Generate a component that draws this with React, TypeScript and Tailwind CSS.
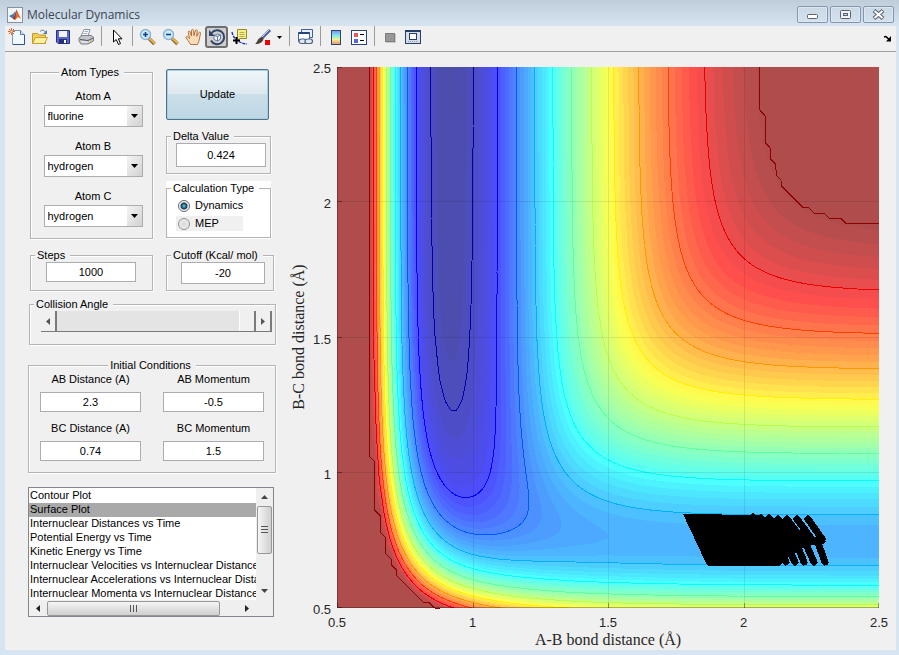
import React, { useState } from "react";

/* ---------- Potential energy surface (London-Eyring-Polanyi-Sato) ---------- */

type Bond = { d: number; beta: number; re: number };

const HF: Bond = { d: 141.2, beta: 2.2187, re: 0.917 };
const HH: Bond = { d: 109.5, beta: 1.942, re: 0.7414 };
const SATO = 0.185;
const CAP = -22.6;
const LINE_BASE = -136.9;
const LINE_STEP = 10.37;

function terms(bond: Bond, r: number) {
  const e = Math.exp(-bond.beta * (r - bond.re));
  const singlet = bond.d * (e * e - 2 * e);
  const triplet = (((1 - SATO) / (1 + SATO)) * bond.d * (e * e + 2 * e)) / 2;
  return { q: (singlet + triplet) / 2, j: (singlet - triplet) / 2 };
}

function energy(rab: number, rbc: number) {
  const a = terms(HF, rab);
  const b = terms(HH, rbc);
  const c = terms(HF, rab + rbc);
  const s = (a.j - b.j) ** 2 + (b.j - c.j) ** 2 + (c.j - a.j) ** 2;
  return a.q + b.q + c.q - Math.sqrt(s / 2);
}

const X0 = 52;
const Y0 = 555;
const SX = 271;
const SY = 270.5;
const N = 100;
const px = (i: number) => X0 + i * 0.02 * SX;
const py = (k: number) => Y0 - k * 0.02 * SY;

const field: number[][] = [];
for (let k = 0; k <= N; k++) {
  const row: number[] = [];
  for (let i = 0; i <= N; i++) row.push(Math.min(CAP, energy(0.5 + i * 0.02, 0.5 + k * 0.02)));
  field.push(row);
}

function jet(v: number, alpha: number) {
  const t = 0.04 + (v - LINE_BASE) / 120.9;
  const ch = (c: number) => Math.max(0, Math.min(1, 1.5 - Math.abs(4 * t - c)));
  const mix = (x: number) => Math.round(255 * (x * alpha + 1 - alpha));
  return `rgb(${mix(ch(3))},${mix(ch(2))},${mix(ch(1))})`;
}

const CORNERS = [[0, 0], [1, 0], [1, 1], [0, 1]];
const f1 = (n: number) => n.toFixed(1);

function trace(level: number) {
  let fill = "";
  let line = "";
  for (let k = 0; k < N; k++) {
    let run = -1;
    for (let i = 0; i <= N; i++) {
      const vals = i < N ? CORNERS.map(([a, b]) => field[k + b][i + a]) : [];
      const full = i < N && vals.every((v) => v < level);
      if (full) {
        if (run < 0) run = i;
        continue;
      }
      if (run >= 0) {
        fill += `M${f1(px(run))} ${f1(py(k))}H${f1(px(i))}V${f1(py(k + 1))}H${f1(px(run))}Z`;
        run = -1;
      }
      if (i === N || !vals.some((v) => v < level)) continue;
      const poly: string[] = [];
      const cross: string[] = [];
      for (let c = 0; c < 4; c++) {
        const n = (c + 1) % 4;
        const [ax, ay] = CORNERS[c];
        const [bx, by] = CORNERS[n];
        if (vals[c] < level) poly.push(`${f1(px(i + ax))} ${f1(py(k + ay))}`);
        if (vals[c] < level !== vals[n] < level) {
          const t = (level - vals[c]) / (vals[n] - vals[c]);
          const p = `${f1(px(i + ax + (bx - ax) * t))} ${f1(py(k + ay + (by - ay) * t))}`;
          poly.push(p);
          cross.push(p);
        }
      }
      fill += `M${poly.join("L")}Z`;
      for (let c = 0; c + 1 < cross.length; c += 2) line += `M${cross[c]}L${cross[c + 1]}`;
    }
  }
  return { fill, line };
}

const bands: { d: string; color: string }[] = [];
const BAND = LINE_STEP / 5;
for (let j = 57; j >= 0; j--) {
  const top = LINE_BASE - 2 * BAND + j * BAND;
  if (top < CAP) bands.push({ d: trace(top).fill, color: jet(top - BAND / 2, 0.7) });
}
const lines: { d: string; color: string }[] = [];
for (let n = 0; n < 11; n++) {
  const level = LINE_BASE + n * LINE_STEP;
  lines.push({ d: trace(level).line, color: jet(level, 1) });
}
lines.push({ d: trace(CAP - 0.001).line, color: "#8f0000" });

const STRANDS = [
  [523, 466, 537, 486], [512, 466, 528, 488], [502, 466, 518, 488], [493, 466, 508, 486], [484, 465, 498, 486],
  [476, 465, 490, 485], [468, 464, 480, 480], [540, 509, 532, 487], [529, 509, 516, 480], [519, 509, 508, 482],
  [510, 509, 498, 485], [501, 509, 490, 485], [494, 509, 484, 490],
];

function Plot() {
  const ticks = [0.5, 1, 1.5, 2, 2.5];
  const gx = (v: number) => X0 + (v - 0.5) * SX;
  const gy = (v: number) => Y0 - (v - 0.5) * SY;
  return (
    <svg viewBox="0 0 611 597" className="block w-full" role="img" aria-label="Surface plot of A-B and B-C bond distances">
      <g shapeRendering="crispEdges">
        <rect x={X0} y={14} width={542} height={541} fill="#af4c4c" />
        {bands.map((b, i) => <path key={i} d={b.d} fill={b.color} />)}
        {lines.map((l, i) => <path key={i} d={l.d} stroke={l.color} fill="none" />)}
        {ticks.slice(1, 4).map((v) => (
          <path key={v} d={`M${Math.round(gx(v))}.5 14V555M52 ${Math.round(gy(v)) - 1}.5H594`} stroke="#000" strokeOpacity="0.09" fill="none" />
        ))}
        {ticks.map((v) => (
          <path key={v} d={`M${Math.min(593, Math.round(gx(v)))}.5 550V555M52 ${Math.max(14, Math.round(gy(v)) - 1)}.5h5`} stroke="#000" strokeOpacity="0.35" fill="none" />
        ))}
        <path d="M52.5 14V555M52 554.5H594" stroke="#000" strokeOpacity="0.3" fill="none" />
        <path d="M398 461L475 462L483 467L492 470L503 474L514 478L526 483L541 488L538 491L527 492L518 495L510 500L503 504L495 513L423 513L420 508Z" />
        {STRANDS.map(([a, b, c, d]) => (
          <path key={`${a}-${b}`} d={`M${a} ${b}L${c} ${d}`} stroke="#000" strokeWidth="7" strokeLinecap="round" />
        ))}
      </g>
      <g fill="#262626" className="font-['Liberation_Sans',Arial,sans-serif] text-[13px]">
        {ticks.map((v) => <text key={v} x={gx(v)} y={574} textAnchor="middle">{v}</text>)}
        {ticks.map((v) => <text key={v} x={46} y={gy(v) + 6} textAnchor="end">{v}</text>)}
      </g>
      <g fill="#262626" className="font-['Liberation_Serif','Times_New_Roman',serif] text-[16px]">
        <text x={323} y={592} textAnchor="middle">A-B bond distance (Å)</text>
        <text transform="translate(19 284) rotate(-90)" textAnchor="middle">B-C bond distance (Å)</text>
      </g>
    </svg>
  );
}

/* ------------------------------- Controls -------------------------------- */

function Panel({ title, center, white, className, children }: {
  title: string; center?: boolean; white?: boolean; className: string; children: React.ReactNode;
}) {
  return (
    <fieldset className={`min-w-0 border border-[#b4b4b4] shadow-[inset_1px_1px_0_#fff,1px_1px_0_#fff] ${className}`}>
      <legend className={`h-[14px] pr-[5px] pl-[2px] leading-[14px] ${center ? "mx-auto" : "ml-[4px]"} ${white ? "bg-white" : "bg-[#f0f0f0]"}`}>{title}</legend>
      {children}
    </fieldset>
  );
}

function Field({ label, value, className }: { label: string; value: string; className: string }) {
  const [text, setText] = useState(value);
  return (
    <input
      aria-label={label}
      value={text}
      onChange={(e) => setText(e.target.value)}
      className={`block border border-[#abadb3] bg-white text-center outline-none ${className}`}
    />
  );
}

function AtomSelect({ label, value }: { label: string; value: string }) {
  return (
    <label className="flex flex-col items-center gap-[2px] leading-[14px]">
      {label}
      <span className="relative block w-[99px]">
        <select defaultValue={value} className="block h-[22px] w-full appearance-none border border-[#abadb3] bg-white pl-[3px] outline-none">
          <option>fluorine</option>
          <option>hydrogen</option>
          <option>chlorine</option>
        </select>
        <span className="pointer-events-none absolute top-[1px] right-[1px] bottom-[1px] flex w-[15px] items-center justify-center bg-gradient-to-br from-[#f4f4f4] to-[#d2d2d2]">
          <svg width="7" height="4" viewBox="0 0 7 4"><path d="M0 0H7L3.5 4Z" /></svg>
        </span>
      </span>
    </label>
  );
}

function LabeledField({ label, value }: { label: string; value: string }) {
  return (
    <label className="flex flex-col items-center gap-[6px] leading-[14px]">
      {label}
      <Field label={label} value={value} className="h-[20px] w-[101px]" />
    </label>
  );
}

function Radio({ label, checked, className }: { label: string; checked?: boolean; className?: string }) {
  return (
    <label className={`flex h-[15px] w-[67px] items-center gap-[5px] pl-[2px] ${className ?? ""}`}>
      <input
        type="radio"
        name="calculation"
        defaultChecked={checked}
        className="h-[12px] w-[12px] shrink-0 appearance-none rounded-full border border-[#8e8f8f] bg-[radial-gradient(#d8d8d8,#f6f6f6)] checked:border-[#6b6b6b] checked:bg-[radial-gradient(circle,#5cc8f0_0,#14384f_3px,#f0f0f0_4px)]"
      />
      {label}
    </label>
  );
}

const PLOTS = [
  "Contour Plot", "Surface Plot", "Internuclear Distances vs Time", "Potential Energy vs Time", "Kinetic Energy vs Time",
  "Internuclear Velocities vs Internuclear Distance", "Internuclear Accelerations vs Internuclear Distance", "Internuclear Momenta vs Internuclear Distance",
];

function PlotList() {
  return (
    <div className="grid h-[130px] w-[246px] grid-cols-[1fr_17px] grid-rows-[1fr_16px] border border-[#828790] bg-white">
      <select
        size={8}
        aria-label="Plot type"
        defaultValue="Surface Plot"
        className="h-[112px] w-full min-w-0 overflow-hidden bg-white pt-px outline-none [scrollbar-width:none] [&>option]:h-[14px] [&>option]:min-h-0 [&>option]:overflow-hidden [&>option]:p-0 [&>option]:pl-px [&>option]:leading-[14px] [&>option]:whitespace-nowrap [&>option:checked]:bg-[linear-gradient(#a9a9a9,#a9a9a9)] [&>option:checked]:text-black"
      >
        {PLOTS.map((p) => <option key={p}>{p}</option>)}
      </select>
      <div className="flex flex-col items-center bg-[#efefef]">
        <button aria-label="Scroll up" className="flex h-[18px] w-full items-center justify-center"><svg width="7" height="4" viewBox="0 0 7 4"><path d="M0 4H7L3.5 0Z" fill="#444" /></svg></button>
        <div className="flex h-[48px] w-[15px] items-center justify-center rounded-[2px] border border-[#979797] bg-gradient-to-r from-[#f5f5f5] to-[#cfcfcf]">
          <svg width="7" height="8" viewBox="0 0 7 8"><path d="M0 .5H7M0 3.5H7M0 6.5H7" stroke="#555" /></svg>
        </div>
        <div className="flex-1" />
        <button aria-label="Scroll down" className="flex h-[18px] w-full items-center justify-center"><svg width="7" height="4" viewBox="0 0 7 4"><path d="M0 0H7L3.5 4Z" fill="#444" /></svg></button>
      </div>
      <div className="flex items-center bg-[#efefef]">
        <button aria-label="Scroll left" className="flex h-full w-[18px] items-center justify-center"><svg width="4" height="7" viewBox="0 0 4 7"><path d="M4 0V7L0 3.5Z" fill="#222" /></svg></button>
        <div className="flex h-[15px] w-[173px] items-center justify-center rounded-[2px] border border-[#979797] bg-gradient-to-b from-[#f5f5f5] to-[#cfcfcf]">
          <svg width="8" height="7" viewBox="0 0 8 7"><path d="M.5 0V7M3.5 0V7M6.5 0V7" stroke="#555" /></svg>
        </div>
        <div className="flex-1" />
        <button aria-label="Scroll right" className="flex h-full w-[18px] items-center justify-center"><svg width="4" height="7" viewBox="0 0 4 7"><path d="M0 0V7L4 3.5Z" fill="#222" /></svg></button>
      </div>
      <div className="bg-[#efefef]" />
    </div>
  );
}

/* -------------------------------- Toolbar -------------------------------- */

function Tool({ label, active, children }: { label: string; active?: boolean; children: React.ReactNode }) {
  return (
    <button
      aria-label={label}
      className={`flex h-[22px] w-[23px] shrink-0 items-center justify-center ${active ? "rounded-[3px] border-2 border-[#6f6f6f] bg-[#cfcfcf]" : ""}`}
    >
      <svg width="18" height="18" viewBox="0 0 18 18" fill="none" className="shrink-0">{children}</svg>
    </button>
  );
}

const Sep = () => <span className="mr-[3px] ml-1 h-[20px] w-px shrink-0 bg-[#9a9a9a]" />;

function Magnifier({ plus }: { plus?: boolean }) {
  return (
    <>
      <path d="M10 10.500L15.500 16" stroke="#7a6a48" strokeWidth="3.600" />
      <path d="M10.500 10.500L16 15.500" stroke="#f0b040" strokeWidth="2.200" />
      <circle cx="6.500" cy="6.500" r="5" fill="#c9ecf7" stroke="#8fb4d8" strokeWidth="1.500" />
      <path d={plus ? "M4 6.500H9M6.500 4V9" : "M4 6.500H9"} stroke="#1c3f86" strokeWidth="1.600" />
    </>
  );
}

function Toolbar() {
  return (
    <div className="flex h-[26px] items-start border-b border-[#a0a0a0] bg-[#f0f0f0] shadow-[0_1px_0_#fff]">
      <Tool label="New figure">
        <path d="M4.500 2.500H12.500L16.500 6.500V16.500H4.500Z" fill="#f2f8ff" stroke="#7d99c4" />
        <path d="M12.500 2.500V6.500H16.500" fill="#cfe0f4" stroke="#5a7aa8" />
        <path d="M16.500 7V16.500H5" stroke="#31528a" />
        <path d="M3.500 0V7M0 3.500H7M1 1L6 6M6 1L1 6" stroke="#e0602c" />
        <rect x="2.500" y="2.500" width="2" height="2" fill="#ffe08a" />
      </Tool>
      <Tool label="Open">
        <path d="M1.500 15.500V5.500H6.500L8 7H14.500V15.500Z" fill="#f3cf52" stroke="#c09a28" />
        <path d="M1.500 15.500L4.500 9.500H16.500L13.500 15.500Z" fill="#fff0a0" stroke="#c8a030" />
        <path d="M9 3.500Q12 .5 14.500 4" stroke="#5878a8" />
        <path d="M16 2V6H12Z" fill="#5878a8" />
      </Tool>
      <Tool label="Save">
        <path d="M2.500 2.500H15.500V15.500H4L2.500 14Z" fill="#5866d2" stroke="#26308c" />
        <rect x="5" y="3" width="8" height="6" fill="#f2f5ff" />
        <rect x="5" y="11" width="8" height="4" fill="#27306a" />
        <rect x="10" y="12" width="2" height="3" fill="#fff" />
      </Tool>
      <Tool label="Print">
        <path d="M4 8L7 1.500H13L11 8Z" fill="#fff" stroke="#8a9098" />
        <path d="M7.500 3.500H11M6.500 5.500H10.500" stroke="#8fb0d8" />
        <path d="M2 10L5 7.500H14L16.500 9V13L11 16H4L2 13Z" fill="#c4c6cb" stroke="#7d8088" />
        <path d="M3 11.500L11 12.500L16 10" stroke="#50545c" />
        <path d="M4.500 14H10.500" stroke="#fff" />
        <path d="M13 13.500L15 12.300" stroke="#e8c334" />
      </Tool>
      <Sep />
      <Tool label="Edit plot">
        <path d="M5.500 2V14L8.200 11.500L10.500 16.500L12.500 15.500L10.300 10.800H14Z" fill="#fff" stroke="#000" />
      </Tool>
      <Sep />
      <Tool label="Zoom in"><Magnifier plus /></Tool>
      <Tool label="Zoom out"><Magnifier /></Tool>
      <Tool label="Pan">
        <path d="M5.500 16.500C4 13.500 2 11.500 1 9.500C1 8 2.500 8 4.500 10.500L3.300 4.500C3 2.800 4.700 2.500 5.200 4L6.500 8L6.500 2.500C6.500 1 8.500 1 8.600 2.500L9 7.500L10.300 2.800C10.700 1.300 12.500 1.700 12.300 3.200L11.700 8.300L13.700 4.800C14.500 3.500 16 4.400 15.500 5.700C14.500 9 14.500 13 12.500 16.500Z" fill="#fbdcb8" stroke="#a8652f" strokeWidth=".9" />
      </Tool>
      <Tool label="Rotate 3D" active>
        <path d="M3.500 5A7 7 0 1 1 3 12.500" stroke="#2f4468" strokeWidth="2" />
        <path d="M1 2V8H7Z" fill="#2f4468" />
        <path d="M6 7.500L9.500 6L12.500 7V11L9.500 13L6 11.500ZM6 7.500L9.500 8.500L12.500 7M9.500 8.500V13" fill="#eef4ff" stroke="#5a7096" strokeWidth=".9" />
      </Tool>
      <Tool label="Data cursor">
        <path d="M1 4Q2 9 5 11Q8 15 16 16" stroke="#1e28d8" strokeWidth="1.300" strokeDasharray="3 1" />
        <path d="M6.500 1.500H15.500V10.500H9L6.500 12Z" fill="#f6ef8c" stroke="#8e8a30" />
        <path d="M8.500 4.500H13.500M8.500 6.500H13.500M8.500 8.500H13.500" stroke="#b4ae50" />
        <path d="M5.500 9V16M2 12.500H9" stroke="#000" strokeWidth="2" />
      </Tool>
      <Tool label="Brush data">
        <path d="M16 2L8 10" stroke="#4c5da0" strokeWidth="3" />
        <path d="M15.500 1.500L8 9" stroke="#c4d0f0" />
        <path d="M1 16C3 15.500 3.500 9.500 8 9L9.500 10.500C9 15 4 16.500 1 16Z" fill="#4a4038" />
        <rect x="11" y="12" width="5" height="5" fill="#f40000" />
      </Tool>
      <button aria-label="Brush colour" className="flex h-[22px] w-[11px] shrink-0 items-center justify-center">
        <svg width="5" height="3" viewBox="0 0 5 3"><path d="M0 0H5L2.500 3Z" /></svg>
      </button>
      <Sep />
      <Tool label="Link plot">
        <path d="M5.500 1.500H16.500V9.500H5.500Z" fill="#e8f0fb" stroke="#3d5f9c" />
        <path d="M2.500 4.500H13.500V13.500H2.500Z" fill="#fff" stroke="#3d5f9c" />
        <path d="M2.500 5H13.500" stroke="#24447e" strokeWidth="2" />
        <rect x="3" y="11" width="7" height="4.500" rx="2.200" fill="#dfe8f0" stroke="#4f6682" strokeWidth="1.200" />
        <rect x="9" y="11" width="7.500" height="4.500" rx="2.200" fill="#dfe8f0" stroke="#4f6682" strokeWidth="1.200" />
      </Tool>
      <Sep />
      <Tool label="Insert colorbar">
        <defs>
          <linearGradient id="colorbar" x1="0" y1="0" x2="0" y2="1">
            <stop offset="0" stopColor="#7a8cf0" /><stop offset=".35" stopColor="#80e8f0" />
            <stop offset=".65" stopColor="#f4f090" /><stop offset="1" stopColor="#f08878" />
          </linearGradient>
        </defs>
        <rect x="4.500" y="2.500" width="9" height="14" fill="url(#colorbar)" stroke="#2c4674" />
      </Tool>
      <Tool label="Insert legend">
        <rect x="1.500" y="2.500" width="15" height="14" fill="#fbfdff" stroke="#2c4674" />
        <rect x="4" y="5" width="4" height="4" fill="#ee5a5a" />
        <rect x="4" y="11" width="4" height="4" fill="#5a62ee" />
        <path d="M10 6.500H14M10 12.500H14" stroke="#000" />
      </Tool>
      <Sep />
      <Tool label="Hide plot tools">
        <rect x="4.500" y="5.500" width="9" height="8" fill="#989898" stroke="#7d7d7d" />
        <path d="M14.500 6V14.500H5" stroke="#c8c8c8" />
      </Tool>
      <Tool label="Show plot tools">
        <rect x="1.500" y="2.500" width="15" height="13" fill="#d8dde6" stroke="#24406e" />
        <path d="M1.500 3H16.500" stroke="#24406e" strokeWidth="2" />
        <rect x="5.500" y="5.500" width="7" height="6" fill="#fff" stroke="#24406e" />
        <path d="M4 13.500H14" stroke="#8894a8" strokeDasharray="1 1" />
      </Tool>
      <button aria-label="Dock figure" className="mr-[4px] ml-auto flex h-[24px] w-[9px] items-center justify-center">
        <svg width="8" height="7" viewBox="0 0 8 7"><path d="M0 2.500Q1 .5 3 2.500L5 4.500" stroke="#000" strokeWidth="1.600" fill="none" /><path d="M7 1V6.500H2Z" /></svg>
      </button>
    </div>
  );
}

function Caption({ label, children }: { label: string; children: React.ReactNode }) {
  return (
    <button aria-label={label} className="flex h-[17px] w-[31px] items-center justify-center rounded-[2px] border border-[#8496ae] bg-gradient-to-b from-[#cbd8e6] to-[#d3e0ee] shadow-[inset_0_0_0_1px_#dde7f1]">
      <svg width="13" height="11" viewBox="0 0 13 11">{children}</svg>
    </button>
  );
}

export default function App() {
  return (
    <div className="flex min-h-screen flex-col bg-[#d7e4f2] pr-[3px] pb-[5px] pl-[5px] font-['Liberation_Sans',Arial,sans-serif] text-[11px] text-black">
      <header className="-mr-[3px] -ml-[5px] flex h-[26px] items-center bg-gradient-to-b from-[#bfcddb] to-[#d6e3f1] pt-[3px] pr-[5px] pl-[7px]">
        <svg width="16" height="16" viewBox="0 0 16 16" aria-hidden="true">
          <rect x=".5" y=".5" width="15" height="15" fill="#f4f7fa" stroke="#8b9198" />
          <path d="M2 9L6 7L8.500 4L7 10L5 11Z" fill="#3b78b8" />
          <path d="M5 11L7 10L9.500 2.500L11 7L8 13Z" fill="#8e2c18" />
          <path d="M9.500 2.500L14 12L11 10L8 13Z" fill="#e4692a" />
        </svg>
        <h1 className="ml-[4px] font-['Open_Sans','Noto_Sans',sans-serif] text-[12px] leading-[16px] text-[#3c4650]">Molecular Dynamics</h1>
        <div className="ml-auto flex gap-[2px]">
          <Caption label="Minimize"><rect x="1.500" y="5.500" width="10" height="4" rx="1" fill="#fff" stroke="#59606e" /></Caption>
          <Caption label="Maximize"><rect x="1.500" y="1.500" width="10" height="8" rx="1" fill="#f2f2f2" stroke="#59606e" /><rect x="4.500" y="4.500" width="4" height="2" fill="#c8d4e2" stroke="#59606e" /></Caption>
          <Caption label="Close"><path d="M2 1.500L11 9.500M11 1.500L2 9.500" stroke="#59606e" strokeWidth="4" /><path d="M2.500 2L10.500 9M10.500 2L2.500 9" stroke="#fff" strokeWidth="2" /></Caption>
        </div>
      </header>
      <Toolbar />
      <main className="flex flex-1 items-start bg-[#f0f0f0] pt-px">
        <form className="w-[280px] shrink-0 pt-[12px] pl-[23px]" onSubmit={(e) => e.preventDefault()}>
          <div className="ml-[2px] flex gap-[13px]">
            <Panel title="Atom Types" center className="h-[174px] w-[123px]">
              <div className="mt-[10px] flex flex-col gap-[12px] pl-[3px]">
                <AtomSelect label="Atom A" value="fluorine" />
                <AtomSelect label="Atom B" value="hydrogen" />
                <AtomSelect label="Atom C" value="hydrogen" />
              </div>
            </Panel>
            <div className="flex flex-col pt-[4px]">
              <button className="h-[51px] w-[103px] rounded-[2px] border border-[#4f7288] bg-[linear-gradient(#f0f6f9_0,#dde9ef_48%,#cbdfe9_50%,#bdd7e5_100%)] shadow-[inset_0_0_0_1px_#a8cfe0]">Update</button>
              <Panel title="Delta Value" className="mt-[9px] h-[45px] w-[105px]">
                <Field label="Delta Value" value="0.424" className="ml-[9px] h-[24px] w-[90px]" />
              </Panel>
              <div className="mt-[7px] w-[105px] bg-white">
                <Panel title="Calculation Type" white className="h-[57px]">
                  <div className="mt-[3px] ml-[9px] flex flex-col gap-[3px]">
                    <Radio label="Dynamics" checked />
                    <Radio label="MEP" className="bg-[#f0f0f0]" />
                  </div>
                </Panel>
              </div>
            </div>
          </div>
          <div className="mt-[9px] ml-[2px] flex gap-[13px]">
            <Panel title="Steps" className="h-[43px] w-[123px]">
              <Field label="Steps" value="1000" className="ml-[15px] h-[20px] w-[90px]" />
            </Panel>
            <Panel title="Cutoff (Kcal/ mol)" className="h-[43px] w-[108px]">
              <Field label="Cutoff (Kcal/ mol)" value="-20" className="ml-[14px] h-[22px] w-[84px]" />
            </Panel>
          </div>
          <Panel title="Collision Angle" className="mt-[6px] ml-px h-[48px] w-[247px]">
            <div className="mr-[3px] ml-[11px] flex h-[21px] border-b border-[#7a7a7a]">
              <button aria-label="Decrease angle" className="flex w-[16px] items-center justify-center border-r-2 border-[#7a7a7a]">
                <svg width="4" height="7" viewBox="0 0 4 7"><path d="M4 0V7L0 3.500Z" fill="#555" /></svg>
              </button>
              <input
                type="range"
                aria-label="Collision Angle"
                min={0}
                max={180}
                defaultValue={180}
                className="h-[20px] min-w-0 flex-1 appearance-none bg-[#e4e4e4] [&::-webkit-slider-thumb]:h-[20px] [&::-webkit-slider-thumb]:w-[17px] [&::-webkit-slider-thumb]:appearance-none [&::-webkit-slider-thumb]:border-r-2 [&::-webkit-slider-thumb]:border-l [&::-webkit-slider-thumb]:border-r-[#7a7a7a] [&::-webkit-slider-thumb]:border-l-white [&::-webkit-slider-thumb]:bg-[#f0f0f0]"
              />
              <button aria-label="Increase angle" className="flex w-[16px] items-center justify-center border-r-2 border-[#7a7a7a]">
                <svg width="4" height="7" viewBox="0 0 4 7"><path d="M0 0V7L4 3.500Z" fill="#555" /></svg>
              </button>
            </div>
          </Panel>
          <Panel title="Initial Conditions" center className="mt-[13px] h-[115px] w-[248px]">
            <div className="ml-[11px] grid w-[224px] grid-cols-[101px_101px] justify-between gap-y-[9px]">
              <LabeledField label="AB Distance (A)" value="2.3" />
              <LabeledField label="AB Momentum" value="-0.5" />
              <LabeledField label="BC Distance (A)" value="0.74" />
              <LabeledField label="BC Momentum" value="1.5" />
            </div>
          </Panel>
          <div className="mt-[14px]"><PlotList /></div>
        </form>
        <figure className="min-w-0 flex-1"><Plot /></figure>
      </main>
    </div>
  );
}
